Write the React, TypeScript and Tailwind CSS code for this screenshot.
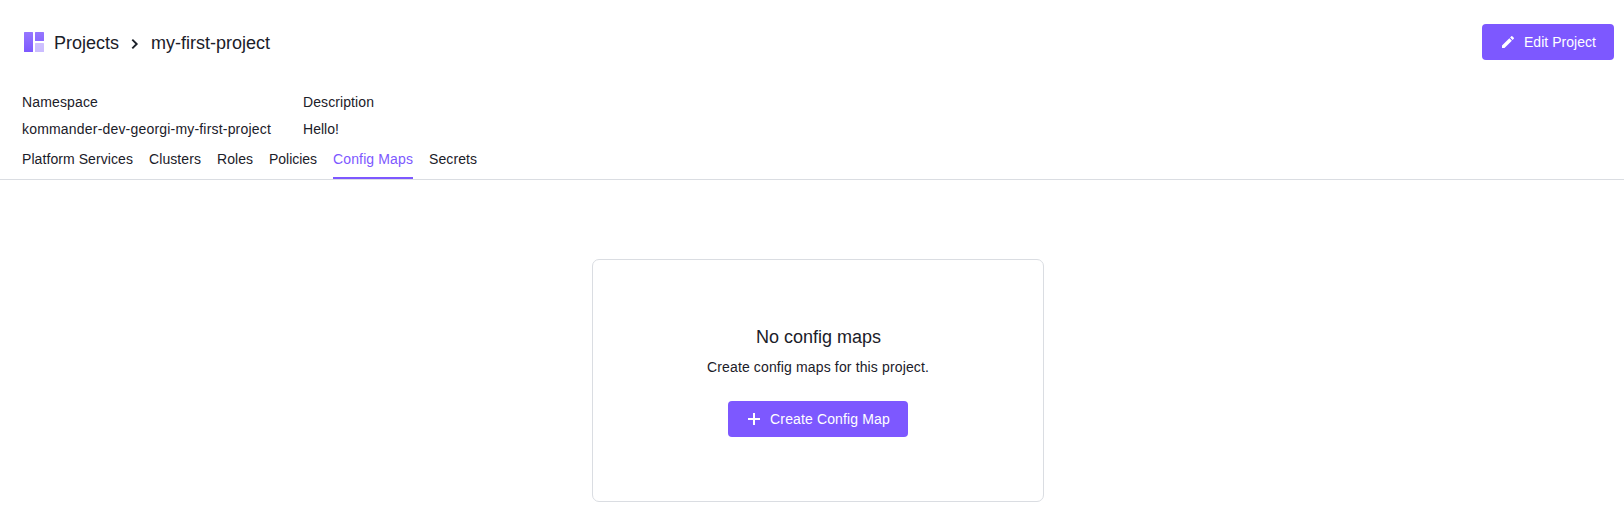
import React from "react";

const tabs = [
  { label: "Platform Services", tracking: "tracking-[0.077px]" },
  { label: "Clusters", tracking: "tracking-[0.083px]" },
  { label: "Roles", tracking: "tracking-[0.04px]" },
  { label: "Policies", tracking: "tracking-[-0.03px]" },
  { label: "Config Maps", tracking: "tracking-[0.129px]" },
  { label: "Secrets", tracking: "tracking-[0.077px]" },
];
const activeTab = "Config Maps";

const details = [
  {
    label: "Namespace",
    value: "kommander-dev-georgi-my-first-project",
    labelTracking: "tracking-[0.145px]",
    valueTracking: "tracking-[0.19px]",
  },
  {
    label: "Description",
    value: "Hello!",
    labelTracking: "tracking-[0.09px]",
    valueTracking: "tracking-[0.04px]",
  },
];

function ProjectsIcon() {
  return (
    <svg width="20" height="20" viewBox="0 0 20 20" className="shrink-0">
      <defs>
        <linearGradient id="tile" x1="0" y1="0" x2="0" y2="20" gradientUnits="userSpaceOnUse">
          <stop offset="0" stopColor="#9676ff" />
          <stop offset="1" stopColor="#7d58ff" />
        </linearGradient>
      </defs>
      <rect width="9" height="20" rx="0.5" fill="url(#tile)" />
      <rect x="11" width="9" height="9" rx="0.5" fill="url(#tile)" />
      <rect x="11" y="11" width="9" height="9" rx="0.5" fill="url(#tile)" opacity="0.4" />
    </svg>
  );
}

function ChevronIcon() {
  return (
    <svg width="16" height="16" viewBox="0 0 16 16" className="shrink-0" fill="none" stroke="#1b2029" strokeWidth="1.9">
      <path d="M5.3 3.6 9.7 8l-4.4 4.4" />
    </svg>
  );
}

function PencilIcon() {
  return (
    <svg width="16" height="16" viewBox="0 0 24 24" fill="currentColor" className="shrink-0">
      <path d="M3 17.25V21h3.75L17.81 9.94l-3.75-3.75L3 17.25zM20.71 7.04a1 1 0 0 0 0-1.41l-2.34-2.34a1 1 0 0 0-1.41 0l-1.83 1.83 3.75 3.75 1.83-1.83z" />
    </svg>
  );
}

function PlusIcon() {
  return (
    <svg width="16" height="16" viewBox="0 0 16 16" fill="currentColor" className="shrink-0">
      <path d="M7 2h2v5h5v2H9v5H7V9H2V7h5z" />
    </svg>
  );
}

function Button({ icon, tracking, children }: { icon: React.ReactNode; tracking: string; children: React.ReactNode }) {
  return (
    <button className="flex h-9 items-center gap-2 rounded-[4px] bg-[#7d58ff] px-[18px] text-sm whitespace-nowrap text-white">
      {icon}
      <span className={tracking}>{children}</span>
    </button>
  );
}

export default function App() {
  return (
    <div className="min-h-[506px] bg-white font-['Liberation_Sans',Arial,sans-serif] text-sm text-[#1b2029]">
      <header className="flex items-center justify-between pt-6 pr-[10px] pl-6">
        <nav className="flex h-9 items-center text-lg leading-7">
          <ProjectsIcon />
          <span className="mt-0.5 ml-[10px]">Projects</span>
          <span className="mx-2 mt-[3px]">
            <ChevronIcon />
          </span>
          <span className="mt-0.5">my-first-project</span>
        </nav>
        <Button icon={<PencilIcon />} tracking="tracking-[0.035px]">
          Edit Project
        </Button>
      </header>

      <dl className="mt-8 flex gap-8 pl-[22px]">
        {details.map(({ label, value, labelTracking, valueTracking }) => (
          <div key={label} className="leading-[21px]">
            <dt className={labelTracking}>{label}</dt>
            <dd className={`mt-1.5 ${valueTracking}`}>{value}</dd>
          </div>
        ))}
      </dl>

      <div className="flex h-[40px] gap-4 border-b border-[#dadde2] pl-[22px] leading-[21px]">
        {tabs.map(({ label, tracking }) => (
          <a
            key={label}
            className={`h-[39px] pt-[9px] ${tracking} ${
              label === activeTab ? "border-b-2 border-[#7d58ff] text-[#7d58ff]" : ""
            }`}
          >
            {label}
          </a>
        ))}
      </div>

      <main className="flex justify-center pt-[79px] pl-3">
        <section className="flex h-[243px] w-[452px] flex-col items-center rounded-[7px] border border-[#dadde2] pt-[63px]">
          <h2 className="pl-px text-lg leading-7">No config maps</h2>
          <p className="mt-1.5 mb-[23px] leading-[21px] tracking-[0.136px]">Create config maps for this project.</p>
          <Button icon={<PlusIcon />} tracking="tracking-[0.135px]">
            Create Config Map
          </Button>
        </section>
      </main>
    </div>
  );
}
